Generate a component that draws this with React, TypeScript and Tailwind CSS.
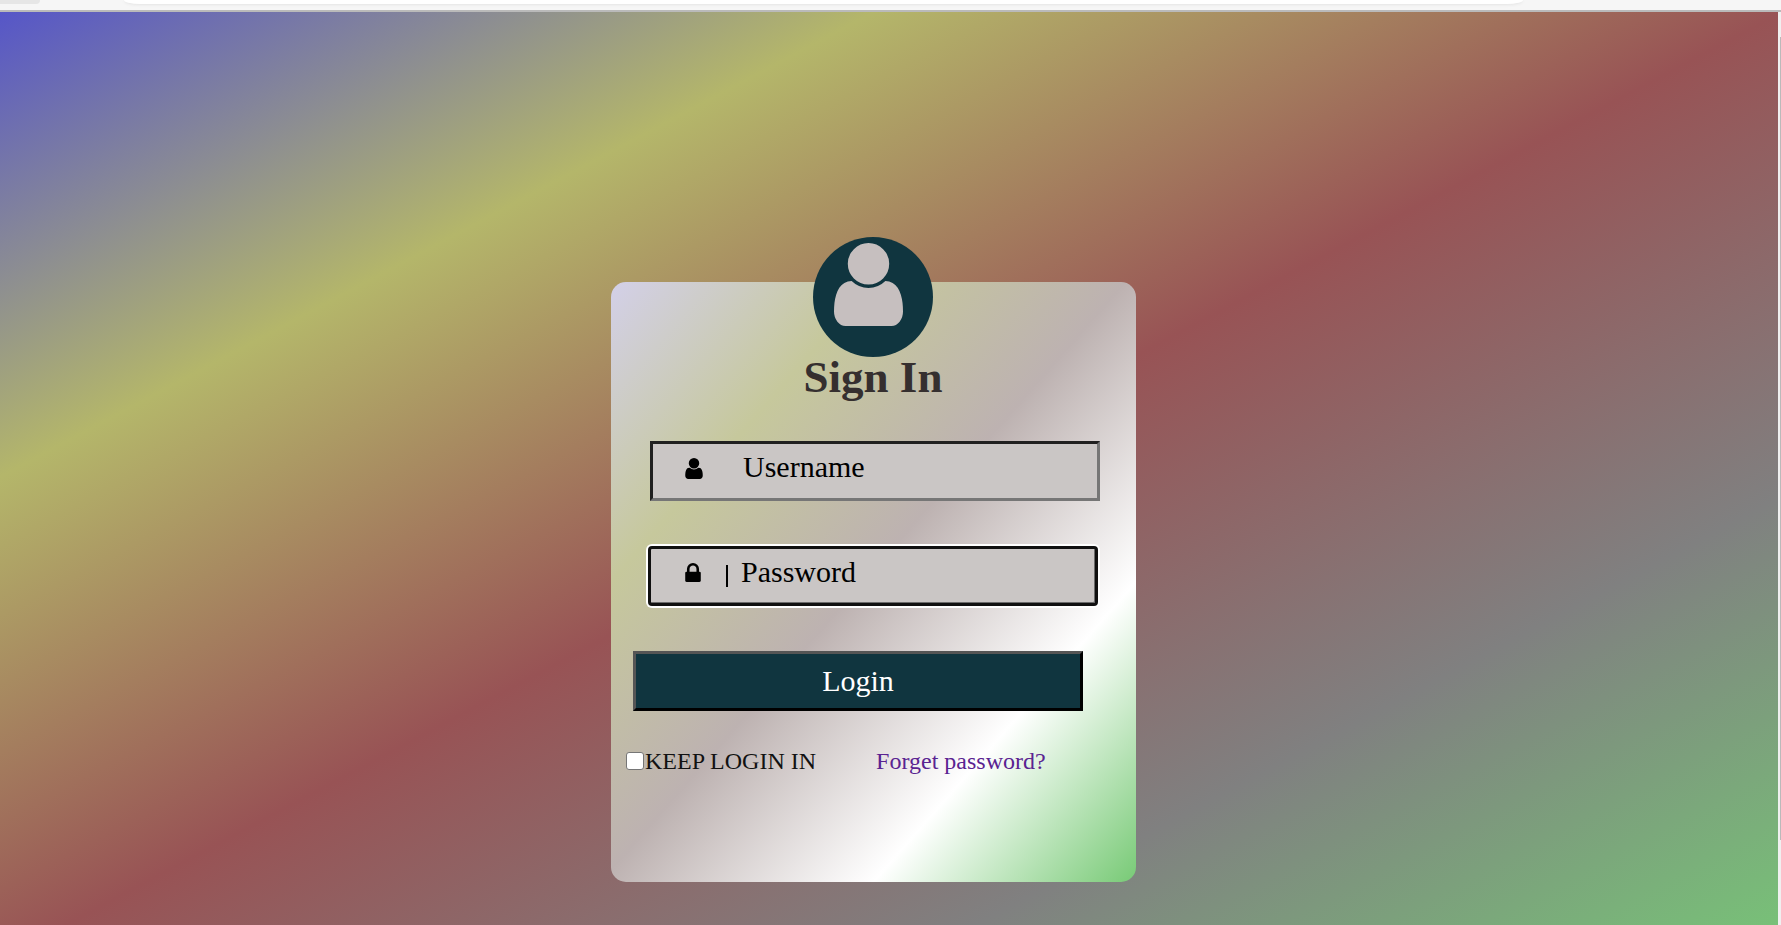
import React from "react";

const USER_PATH =
  "M1536 1399q0 109-62.5 187t-150.5 78h-854q-88 0-150.5-78t-62.5-187q0-85 8.5-160.5t31.5-152t58.5-131t94-89t134.5-34.5q131 128 313 128t313-128q76 0 134.5 34.5t94 89t58.5 131t31.5 152t8.5 160.5zM1280 512q0 159-112.5 271.5t-271.5 112.5t-271.5-112.5t-112.5-271.5t112.5-271.5t271.5-112.5t271.5 112.5t112.5 271.5z";

const LOCK_PATH =
  "M640 768h512v-192q0-106-75-181t-181-75-181 75-75 181v192zm832 96v576q0 40-28 68t-68 28h-960q-40 0-68-28t-28-68v-576q0-40 28-68t68-28h32v-192q0-184 132-316t316-132 316 132 132 316v192h32q40 0 68 28t28 68z";

function UserIcon({ className }: { className: string }) {
  return (
    <svg viewBox="256 128 1280 1536" fill="currentColor" aria-hidden="true" className={className}>
      <path d={USER_PATH} />
    </svg>
  );
}

function LockIcon({ className }: { className: string }) {
  return (
    <svg viewBox="320 128 1152 1408" fill="currentColor" aria-hidden="true" className={className}>
      <path d={LOCK_PATH} />
    </svg>
  );
}

function BrowserEdge() {
  return (
    <div className="flex h-3 items-start border-b-2 border-[#bababa] bg-[#f6f6f6]">
      <div className="h-1 w-10 rounded-br-sm bg-[#e6e6e6]" />
      <div className="mr-[258px] ml-[84px] h-1 grow rounded-[0_0_16px_16px/0_0_4px_4px] bg-white shadow-[0_1px_3px_#e4e4e4]" />
    </div>
  );
}

function LoginCard() {
  return (
    <section className="mt-[270px] mb-[43px] h-[600px] w-[525px] rounded-[15px] bg-[linear-gradient(to_bottom_right,#d3d0e8,#c6c89c_25%,#bdb2b1_49%,#ffffff_75%,#78ca76)] pr-px">
      <div className="mx-auto -mt-[45px] flex size-[120px] justify-center rounded-full bg-[#10353f] pt-1.5 pr-2.5 text-[#c6bfbf]">
        <UserIcon className="h-[83px] w-[69px]" />
      </div>
      <h1 className="text-center text-[45px] leading-10 font-bold text-[#352f2f]">Sign In</h1>

      <form className="mt-11 flex flex-col" onSubmit={(e) => e.preventDefault()}>
        <div className="relative ml-[39px] w-[450px]">
          <UserIcon className="absolute top-[17px] left-[35px] h-[21px] w-[18px]" />
          <input
            type="text"
            aria-label="Username"
            placeholder="Username"
            className="block h-[60px] w-full border-3 border-t-[#202020] border-r-[#767676] border-b-[#767676] border-l-[#202020] bg-[#cac6c5] pb-2 pl-[90px] text-[30px] placeholder:text-black"
          />
        </div>

        <div className="relative mt-[45px] ml-[37px] w-[450px]">
          <LockIcon className="absolute top-[17px] left-[37px] h-[19px] w-4" />
          <span className="absolute top-[19px] left-[78px] h-[22px] w-0.5 bg-black" />
          <input
            type="password"
            aria-label="Password"
            placeholder="Password"
            className="block h-[60px] w-full rounded-sm border-3 border-[#101010] bg-[#cac6c5] pb-2 pl-[90px] text-[30px] shadow-[0_0_0_2px_#ffffff,inset_-1px_-1px_#6b6b6b] outline-none placeholder:text-black"
          />
        </div>

        <button
          type="submit"
          className="mt-[45px] ml-[22px] h-[60px] w-[450px] border-3 border-t-[#555555] border-r-black border-b-black border-l-[#555555] bg-[#10353f] pb-0.5 text-[30px] text-white"
        >
          Login
        </button>

        <div className="mt-[34px] ml-[15px] flex items-center gap-[60px] text-2xl leading-8">
          <label className="flex items-center text-[#121212]">
            <input
              type="checkbox"
              className="mr-px size-[18px] appearance-none rounded-[3px] border border-[#767676] bg-white checked:bg-[#0075ff]"
            />
            KEEP LOGIN IN
          </label>
          <a href="#forgot" className="text-[#5a2391]">
            Forget password?
          </a>
        </div>
      </form>
    </section>
  );
}

export default function App() {
  return (
    <div className="flex min-h-screen flex-col font-['Liberation_Serif',serif] text-black">
      <BrowserEdge />
      <div className="flex grow">
        <main className="flex grow justify-center bg-[linear-gradient(152deg,#5656c8,#b4b66a_25%,#985355_51%,#808080_77%,#78c078)] pr-[31px]">
          <LoginCard />
        </main>
        <div className="w-[3px] bg-[#f0f0f0] pt-[25px] pl-0.5">
          <div className="h-[803px] bg-[#bababa]" />
        </div>
      </div>
    </div>
  );
}
